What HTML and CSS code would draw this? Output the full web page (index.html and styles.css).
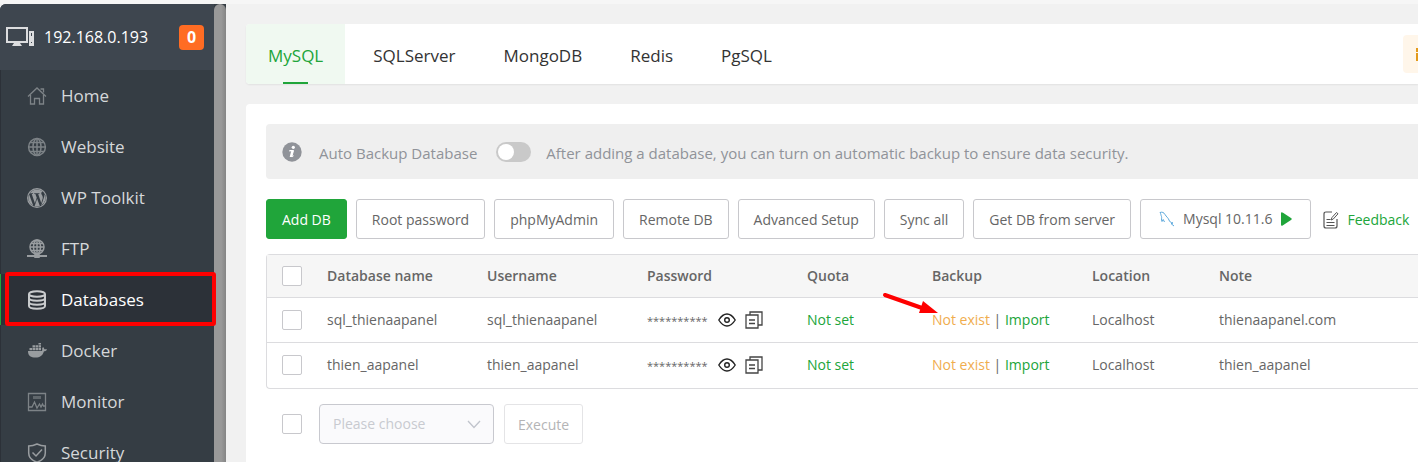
FILE: index.html
```html
<!DOCTYPE html>
<html lang="en">
<head>
<meta charset="utf-8">
<title>Databases</title>
<link rel="stylesheet" href="styles.css">
</head>
<body>
<div class="app">
  <aside class="sidebar">
    <div class="sidebar-body">
      <header class="host">
        <svg class="host-icon" width="28" height="20" viewBox="0 0 28 20"><path d="M1 1h20v14H1z" fill="none" stroke="#dcdddf" stroke-width="2"/><path d="M8 16h6l2 3H6z" fill="#dcdddf"/><path d="M23 4h5v15h-5z" fill="#dcdddf"/><path d="M25 6h1v3h-1zM25 15h1v1h-1z" fill="#3e464f"/></svg>
        <span class="host-ip">192.168.0.193</span>
        <span class="host-badge">0</span>
      </header>
      <nav class="menu">
        <a class="menu-item" href="#"><svg class="menu-icon" viewBox="0 0 20 20"><g fill="none" stroke="currentColor" stroke-width="1.3"><path d="M1 10.500L10 2l9 8.500"/><path d="M3.500 9v9h4v-5.500h5V18h4V9M13.500 3h3v3.500"/></g></svg>Home</a>
        <a class="menu-item" href="#"><svg class="menu-icon" viewBox="0 0 20 20"><g fill="none" stroke="currentColor" stroke-width="1.500"><circle cx="10" cy="10" r="8.400"/><ellipse cx="10" cy="10" rx="4" ry="8.400"/><path d="M10 1.600v16.800M1.600 10h16.800M3.200 5.500h13.600M3.200 14.500h13.600"/></g></svg>Website</a>
        <a class="menu-item" href="#"><svg class="menu-icon bright" viewBox="0 0 16 16"><circle cx="8" cy="8" r="7.500" fill="none" stroke="currentColor"/><path fill="currentColor" d="M12.633 7.653c0-.848-.305-1.435-.566-1.892l-.08-.13c-.317-.51-.594-.958-.594-1.480 0-.63.478-1.218 1.152-1.218l.089.006A6.840 6.840 0 0 0 8 1.137 6.860 6.860 0 0 0 2.266 4.230c.16.005.313.009.442.009.717 0 1.828-.087 1.828-.087.37-.022.414.521.044.565 0 0-.371.044-.785.065l2.500 7.434 1.500-4.506-1.070-2.929c-.369-.022-.719-.065-.719-.065-.37-.022-.326-.588.043-.566 0 0 1.134.087 1.808.087.718 0 1.830-.087 1.830-.087.37-.022.413.522.043.566 0 0-.372.043-.785.065l2.480 7.377.684-2.287.054-.173c.27-.86.47-1.495.47-2.046zM1.137 8a6.860 6.860 0 0 0 3.868 6.176L1.730 5.206A6.800 6.800 0 0 0 1.137 8zm6.983.6l-2.060 5.983a6.850 6.850 0 0 0 4.218-.11zM14 4.700c.1 1.300-.2 2.300-.6 3.300l-2.050 5.960A6.860 6.860 0 0 0 14 4.700z"/></svg>WP Toolkit</a>
        <a class="menu-item" href="#"><svg class="menu-icon bright" viewBox="0 0 20 20"><g fill="none" stroke="currentColor" stroke-width="1.500"><circle cx="10" cy="8" r="7"/><ellipse cx="10" cy="8" rx="3.500" ry="7"/><path d="M10 1v14M3 8h14M4 4.500h12M4 11.500h12"/></g><path d="M0 16h20v2H0z" fill="currentColor"/><rect x="7" y="15" width="6" height="4" rx="1" fill="currentColor"/></svg>FTP</a>
        <a class="menu-item active" href="#" aria-current="page"><svg class="menu-icon" viewBox="0 0 20 20"><g fill="none" stroke="currentColor" stroke-width="2"><ellipse cx="10" cy="4" rx="8" ry="2.800"/><path d="M2 4v12c0 3.500 16 3.500 16 0V4M2 8c0 3.500 16 3.500 16 0M2 12c0 3.500 16 3.500 16 0"/></g></svg>Databases</a>
        <a class="menu-item" href="#"><svg class="menu-icon bright" viewBox="0 0 20 20"><path fill="currentColor" d="M1 10h13.500c.8-.4 1-1.100.6-2.600l.9-1.400c.9.700 1.300 1.400 1.300 2.200h2.700c-.4 1.400-1.500 2-3 2-1.500 4.500-4 6.300-8.500 6.300C4 16.500 1 15 1 10zM2.500 7H5v2.300H2.500zM5.500 7H8v2.300H5.500zM8.500 7H11v2.300H8.500zM11.500 7H14v2.300h-2.500zM5.500 4.200H8v2.200H5.500zM8.500 4.200H11v2.200H8.500zM11.500 4.200H14v2.200h-2.500zM11.500 2H14v1.600h-2.500z"/></svg>Docker</a>
        <a class="menu-item" href="#"><svg class="menu-icon" viewBox="0 0 20 20"><g fill="none" stroke="currentColor" stroke-width="1.300"><path d="M1.500 1.500h17v17h-17z"/><path d="M2 15h3l2.500-5 2.500 6 2.500-4 1.500 3 1.500-3 1 2h2"/></g><path d="M6 4h8v3H6z" fill="currentColor" opacity=".6"/></svg>Monitor</a>
        <a class="menu-item" href="#"><svg class="menu-icon bright" viewBox="0 0 20 20"><g fill="none" stroke="currentColor" stroke-width="1.500"><path d="M10 1c3 1.500 5.500 2 8.300 2v7c0 5-3.300 7.500-8.300 9.300C5 17.500 1.700 15 1.700 10V3C4.500 3 7 2.500 10 1z"/><path d="M5.500 9.500L9 13l6-6.500"/></g></svg>Security</a>
      </nav>
    </div>
    <div class="scroll-track"></div>
  </aside>

  <main class="content">
    <nav class="tabs">
      <a class="tab current" href="#">MySQL</a>
      <a class="tab" href="#">SQLServer</a>
      <a class="tab" href="#">MongoDB</a>
      <a class="tab" href="#">Redis</a>
      <a class="tab" href="#">PgSQL</a>
      <span class="promo"><svg width="14" height="14" viewBox="0 0 14 14"><path fill="#e39a1c" d="M0 1h6v4H0zM0 6h14v8H0zM8 1h6v4H8z"/></svg></span>
    </nav>

    <section class="panel">
      <div class="notice">
        <svg class="notice-icon" width="20" height="20" viewBox="0 0 20 20"><circle cx="10" cy="10" r="9.700" fill="#909399"/><circle cx="11.300" cy="5.300" r="1.600" fill="#fff"/><path d="M7.500 8.500h4l-1.700 6.200c.8 0 1.300-.4 1.800-1M7.300 9l1.500 0" fill="none" stroke="#fff" stroke-width="1"/><path d="M9.300 8.400h2.300L9.900 15H7.700z" fill="#fff"/></svg>
        <label for="auto-backup">Auto Backup Database</label>
        <input class="switch" type="checkbox" id="auto-backup">
        <span>After adding a database, you can turn on automatic backup to ensure data security.</span>
      </div>

      <div class="toolbar">
        <button class="btn primary">Add DB</button>
        <button class="btn">Root password</button>
        <button class="btn">phpMyAdmin</button>
        <button class="btn">Remote DB</button>
        <button class="btn">Advanced Setup</button>
        <button class="btn">Sync all</button>
        <button class="btn">Get DB from server</button>
        <button class="btn version"><svg width="16" height="16" viewBox="0 0 16 16"><path d="M1 1.500c2-.8 4 0 5 2 1.500 2.500 3 3 4 5.500.4 1.500 1.500 2.500 4 3l-2 .6 3 2.400M1 1.500c1 1.500.8 2.500 1.500 4 .5 1.500-.5 3 .5 5l1.200-2 1.300 2.500" fill="none" stroke="#5ba8dc"/></svg><span>Mysql 10.11.6</span><svg width="11" height="14" viewBox="0 0 11 14"><path d="M0 1.500Q0-.5 2 .8L10 6q1.500 1 0 2L2 13.200Q0 14.500 0 12.500z" fill="#20a53a"/></svg></button>
        <a class="feedback" href="#"><svg width="16" height="18" viewBox="0 0 16 18"><path d="M9 1H3Q1 1 1 3v12q0 2 2 2h9q2 0 2-2V8M3.500 8.500h4M3.500 11.500h8M3.500 14.500h8" fill="none" stroke="#555" stroke-width="1.200"/><path d="M8 9l1-2.500L13.500 1.500l1.500 1.300-4.800 5.300z" fill="none" stroke="#555"/></svg>Feedback</a>
      </div>

      <div class="table-wrap">
        <table class="grid">
          <colgroup><col class="c-check"><col class="c-name"><col class="c-name"><col class="c-name"><col class="c-quota"><col class="c-name"><col class="c-loc"><col></colgroup>
          <thead>
            <tr><th><input class="check" type="checkbox" aria-label="Select all"></th><th>Database name</th><th>Username</th><th>Password</th><th>Quota</th><th>Backup</th><th>Location</th><th>Note</th></tr>
          </thead>
          <tbody>
            <tr>
              <td><input class="check" type="checkbox" aria-label="Select sql_thienaapanel"></td>
              <td>sql_thienaapanel</td><td>sql_thienaapanel</td>
              <td><div class="secret"><span class="stars">**********</span><button class="icon-btn" aria-label="Show password"><svg width="18" height="14" viewBox="0 0 18 14"><path d="M.8 7Q4.500 1 9 1t8.200 6Q13.500 13 9 13T.8 7z" fill="none" stroke="#222" stroke-width="1.400"/><circle cx="9" cy="7" r="2.300" fill="none" stroke="#222" stroke-width="1.400"/></svg></button><button class="icon-btn" aria-label="Copy password"><svg width="18" height="18" viewBox="0 0 18 18"><path d="M1 4h12v13H1zM4 9h6M4 12.500h6M5 4V1h12v13h-4" fill="none" stroke="#444" stroke-width="1.300"/></svg></button></div></td>
              <td><a class="ok" href="#">Not set</a></td>
              <td class="backup"><a class="warn" href="#">Not exist</a> | <a class="ok" href="#">Import</a><svg class="arrow" width="58" height="26" viewBox="0 0 58 26"><path d="M3 4L40 17" stroke="#fe0000" stroke-width="4" stroke-linecap="round"/><path d="M41 10L56 22 37 22z" fill="#fe0000"/></svg></td>
              <td>Localhost</td><td>thienaapanel.com</td>
            </tr>
            <tr>
              <td><input class="check" type="checkbox" aria-label="Select thien_aapanel"></td>
              <td>thien_aapanel</td><td>thien_aapanel</td>
              <td><div class="secret"><span class="stars">**********</span><button class="icon-btn" aria-label="Show password"><svg width="18" height="14" viewBox="0 0 18 14"><path d="M.8 7Q4.500 1 9 1t8.200 6Q13.500 13 9 13T.8 7z" fill="none" stroke="#222" stroke-width="1.400"/><circle cx="9" cy="7" r="2.300" fill="none" stroke="#222" stroke-width="1.400"/></svg></button><button class="icon-btn" aria-label="Copy password"><svg width="18" height="18" viewBox="0 0 18 18"><path d="M1 4h12v13H1zM4 9h6M4 12.500h6M5 4V1h12v13h-4" fill="none" stroke="#444" stroke-width="1.300"/></svg></button></div></td>
              <td><a class="ok" href="#">Not set</a></td>
              <td><a class="warn" href="#">Not exist</a> | <a class="ok" href="#">Import</a></td>
              <td>Localhost</td><td>thien_aapanel</td>
            </tr>
          </tbody>
        </table>
      </div>

      <div class="batch">
        <input class="check" type="checkbox" aria-label="Select all rows">
        <span class="select-box">
          <select class="select" disabled aria-label="Batch action"><option>Please choose</option></select>
          <svg class="chevron" width="14" height="9" viewBox="0 0 14 9"><path d="M1 1l6 6.500L13 1" fill="none" stroke="#c0c4cc" stroke-width="1.300"/></svg>
        </span>
        <button class="btn muted" disabled>Execute</button>
      </div>
    </section>
  </main>
</div>
</body>
</html>
```
FILE: styles.css
```css
* { box-sizing: border-box; }
body {
  margin: 0;
  background: #f1f1f1;
  border-top: 4px solid #f6f6f6;
  color: #666;
  font: 14px/20px "Open Sans", "Noto Sans", sans-serif;
  overflow: hidden;
}
a { color: inherit; text-decoration: none; }
svg { flex: none; display: block; }
button { font: inherit; color: inherit; }

.app { display: flex; height: calc(100vh - 4px); }

/* Sidebar */
.sidebar { display: flex; flex: none; width: 226px; background: #353d44; overflow: hidden; border-top-left-radius: 6px; }
.sidebar-body { flex: 1; }
.scroll-track { width: 12px; background: linear-gradient(90deg, #999 0 60%, #858585); border-radius: 6px 6px 0 0; }
.host { display: flex; align-items: center; height: 66px; padding: 0 10px 0 6px; background: #3e464f; color: #fff; font-size: 16px; }
.host-ip { margin-left: 10px; flex: 1; }
.host-badge { width: 25px; height: 25px; border-radius: 4px; background: #ff6c23; font-weight: 700; line-height: 25px; text-align: center; }
.menu-item {
  position: relative;
  display: flex;
  align-items: center;
  gap: 14px;
  height: 51px;
  padding-left: 26px;
  border-left: 1px solid #2c3138;
  color: #d5d8da;
  font-size: 17px;
}
.menu-icon { width: 20px; height: 20px; color: #7d8387; }
.menu-icon.bright { color: #999da0; }
.menu-item.active { background: #2c3138; border-left-color: #20a53a; color: #fff; }
.menu-item.active .menu-icon { color: #c9cbcd; }
.menu-item.active::after { content: ""; position: absolute; inset: -2px -2px -1px 4px; border: 4px solid #fe0000; border-radius: 3px; }

/* Content */
.content { flex: 1; min-width: 0; padding: 20px 0 0 20px; display: flex; flex-direction: column; gap: 20px; }
.tabs { display: flex; align-items: stretch; height: 60px; background: #fff; border-radius: 4px 0 0 4px; box-shadow: 0 1px 2px #0001; color: #333; font-size: 17px; }
.tab { position: relative; display: flex; align-items: center; padding: 4px 24px 0; }
.tab.current { padding: 4px 22px 0; margin-right: 4px; background: #f0f9f1; color: #20a53a; border-radius: 4px 0 0 4px; }
.tab.current::after { content: ""; position: absolute; left: calc(50% - 13px); bottom: 0; width: 25px; height: 2px; background: #20a53a; }
.promo { align-self: center; display: flex; align-items: center; width: 15px; height: 38px; margin-left: auto; padding-left: 13px; background: #fff6ea; border-radius: 4px 0 0 4px; overflow: hidden; }

.panel { flex: 1; padding: 20px 0 0 20px; background: #fff; border-radius: 4px 0 0 0; }
.notice { display: flex; align-items: center; height: 55px; padding-left: 16px; background: #efefef; border-radius: 4px 0 0 4px; color: #909399; font-size: 15px; }
.notice label { margin: 2px 19px 0 17px; }
.notice span { margin: 2px 0 0 15px; }
.switch { appearance: none; width: 35px; height: 20px; margin: 0; padding: 2px; border-radius: 10px; background: #c9c9c9; }
.switch::before { content: ""; display: block; width: 16px; height: 16px; border-radius: 50%; background: #fff; }

.toolbar { display: flex; gap: 9px; padding: 20px 0 15px; }
.btn { flex: none; height: 40px; padding: 2px 15px 0; border: 1px solid #c8c8cc; border-radius: 3px; background: #fff; white-space: nowrap; }
.btn.primary { border-color: #20a53a; background: #20a53a; color: #fff; }
.btn.version { display: flex; align-items: center; gap: 8px; padding: 0 18px; }
.feedback { display: flex; align-items: center; gap: 9px; margin-left: 3px; padding-top: 2px; color: #20a53a; }

.table-wrap { border: 1px solid #dcdcdf; border-right: 0; border-radius: 4px 0 0 4px; }
.grid { width: 100%; border-collapse: collapse; table-layout: fixed; }
.c-check { width: 45px; }
.c-name { width: 160px; }
.c-quota { width: 125px; }
.c-loc { width: 127px; }
.grid th, .grid td { height: 45px; padding: 0 0 0 15px; text-align: left; white-space: nowrap; }
.grid th { height: 42px; background: #f6f6f6; font-weight: 600; }
.grid tr:last-child td { height: 46px; }
.grid td { border-top: 1px solid #dcdcdf; }
.check { appearance: none; display: block; width: 20px; height: 20px; margin: 0; border: 1px solid #c8c8cc; border-radius: 2px; background: #fff; }
.secret { display: flex; align-items: center; }
.stars { width: 71px; padding-top: 2px; font-size: 11px; }
.icon-btn { display: block; margin-right: 9px; padding: 0; border: 0; background: none; }
.ok { color: #20a53a; }
.warn { color: #f0ad4e; }
.grid .backup { position: relative; }
.arrow { position: absolute; left: -35px; top: -7px; }

.batch { display: flex; align-items: center; padding: 15px 0 0 16px; }
.select-box { position: relative; margin: 0 10px 0 17px; }
.select { appearance: none; display: block; width: 175px; height: 40px; padding: 0 13px; border: 1px solid #c8c9cf; border-radius: 4px; background: #fafafc; color: #c8cad0; font: inherit; opacity: 1; }
.chevron { position: absolute; right: 13px; top: 16px; }
.btn.muted { padding: 2px 13px 0; border-color: #e4e4e6; color: #b4b4b6; }
```
